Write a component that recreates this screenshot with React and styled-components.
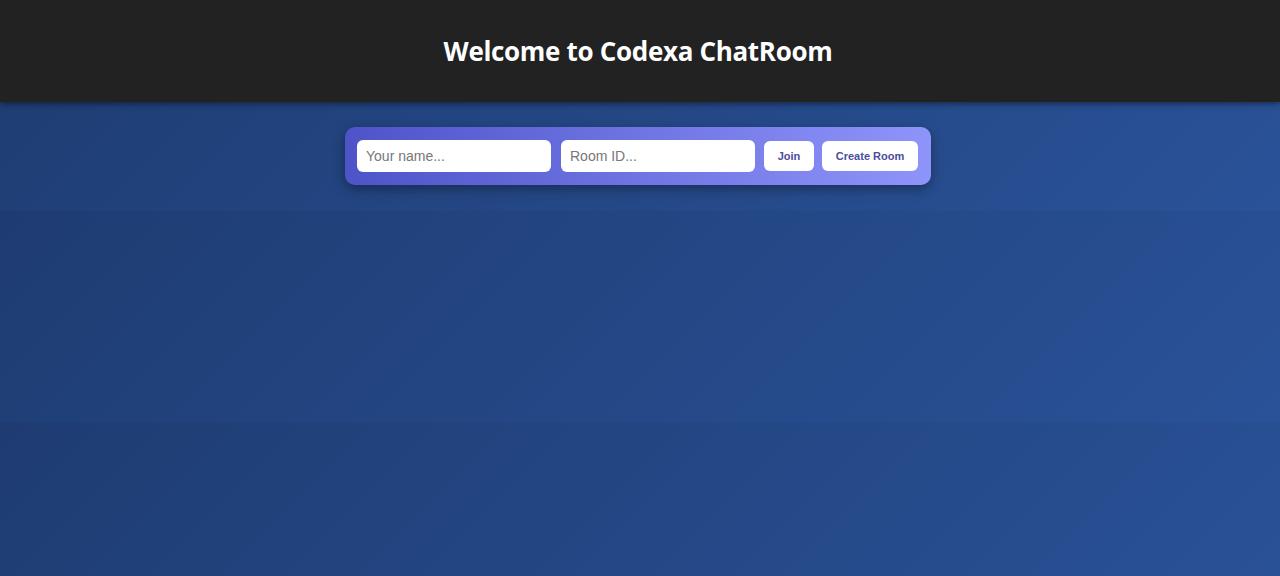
import React from "react";
import styled, { createGlobalStyle } from "styled-components";

const Global = createGlobalStyle`
  html { background: linear-gradient(135deg, #1e3c72, #2a5298); }
  body { margin: 0; font-family: "Liberation Sans", Arial, sans-serif; }
  * { box-sizing: border-box; }
`;

const Header = styled.header`
  background: #222222;
  height: 102px;
  display: flex;
  align-items: center;
  justify-content: center;
  box-shadow: 0 2px 6px rgba(0, 0, 0, 0.45);
  position: relative;
`;

const Title = styled.h1`
  margin: 0 0 0 -4px;
  color: #ffffff;
  font-family: "Open Sans", "Noto Sans", sans-serif;
  font-weight: 700;
  font-size: 26px;
  letter-spacing: -0.32px;
`;

const Main = styled.main`
  display: flex;
  justify-content: center;
  padding: 25px 4px 26px 0;
`;

const Form = styled.div`
  display: flex;
  align-items: center;
  padding: 12px 13px 12px 12px;
  width: 586px;
  height: 58px;
  border-radius: 10px;
  background: linear-gradient(90deg, #4e54c8, #8f94fb);
  box-shadow: 0 4px 12px rgba(0, 0, 0, 0.35);
`;

const Input = styled.input`
  width: 194px;
  height: 32px;
  border: none;
  border-radius: 6px;
  padding: 0 9px;
  margin-right: ${(p) => p.$mr || 0}px;
  font-family: "Liberation Sans", Arial, sans-serif;
  font-size: 14px;
  background: #fff;
  color: #333;
  outline: none;
  &::placeholder { color: #777; }
`;

const Button = styled.button`
  height: 30px;
  width: ${(p) => p.$w}px;
  border: none;
  border-radius: 6px;
  background: #fff;
  color: #4a4d9e;
  font-family: "Liberation Sans", Arial, sans-serif;
  font-weight: 700;
  font-size: 11px;
  cursor: pointer;
  padding: 0;
  margin-right: ${(p) => p.$mr || 0}px;
`;

export default function App() {
  return (
    <>
      <Global />
      <Header>
        <Title>Welcome to Codexa ChatRoom</Title>
      </Header>
      <Main>
        <Form>
          <Input placeholder="Your name..." $mr={10} />
          <Input placeholder="Room ID..." $mr={9} />
          <Button $w={50} $mr={8}>Join</Button>
          <Button $w={96}>Create Room</Button>
        </Form>
      </Main>
    </>
  );
}
